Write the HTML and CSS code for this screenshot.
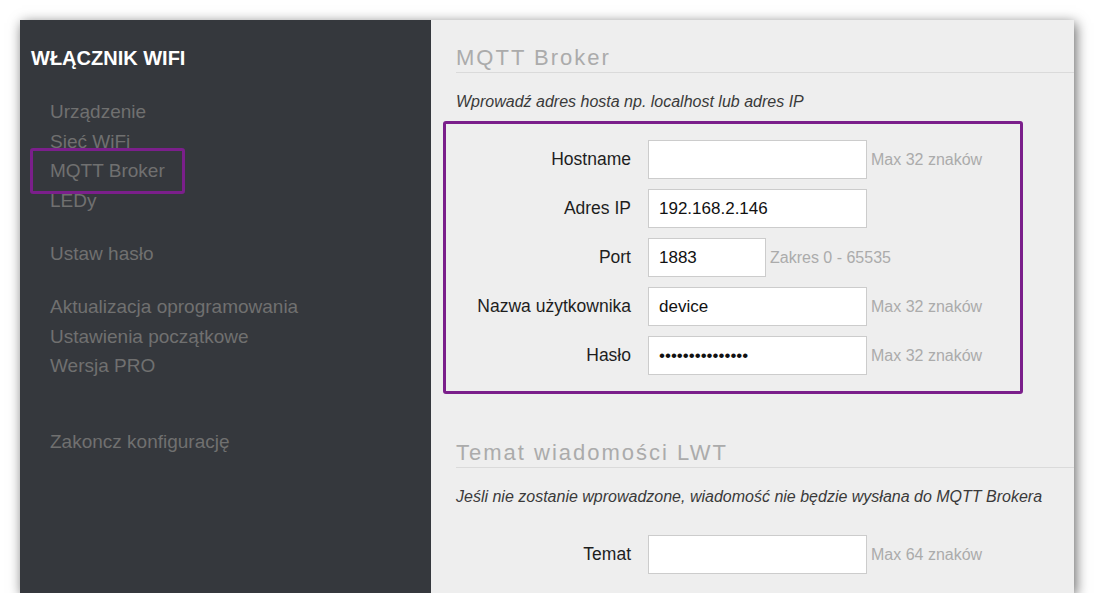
FILE: index.html
```html
<!DOCTYPE html>
<html lang="pl">
<head>
<meta charset="utf-8">
<title>Włącznik WiFi – MQTT Broker</title>
<link rel="stylesheet" href="styles.css">
</head>
<body>
<div class="window">
  <aside class="sidebar">
    <h1 class="brand">WŁĄCZNIK WIFI</h1>
    <ul class="nav-group">
      <li><a class="nav-link" href="#">Urządzenie</a></li>
      <li><a class="nav-link" href="#">Sieć WiFi</a></li>
      <li><a class="nav-link is-marked" href="#">MQTT Broker</a></li>
      <li><a class="nav-link" href="#">LEDy</a></li>
    </ul>
    <ul class="nav-group">
      <li><a class="nav-link" href="#">Ustaw hasło</a></li>
    </ul>
    <ul class="nav-group">
      <li><a class="nav-link" href="#">Aktualizacja oprogramowania</a></li>
      <li><a class="nav-link" href="#">Ustawienia początkowe</a></li>
      <li><a class="nav-link" href="#">Wersja PRO</a></li>
    </ul>
    <ul class="nav-group nav-group-last">
      <li><a class="nav-link" href="#">Zakoncz konfigurację</a></li>
    </ul>
  </aside>
  <main class="content">
    <section class="section">
      <h2 class="section-title">MQTT Broker</h2>
      <p class="section-desc">Wprowadź adres hosta np. localhost lub adres IP</p>
      <div class="form-box">
        <div class="form-row">
          <label class="form-label">Hostname</label>
          <input class="field" type="text" value="">
          <span class="hint">Max 32 znaków</span>
        </div>
        <div class="form-row">
          <label class="form-label">Adres IP</label>
          <input class="field" type="text" value="192.168.2.146">
        </div>
        <div class="form-row">
          <label class="form-label">Port</label>
          <input class="field field-short" type="text" value="1883">
          <span class="hint">Zakres 0 - 65535</span>
        </div>
        <div class="form-row">
          <label class="form-label">Nazwa użytkownika</label>
          <input class="field" type="text" value="device">
          <span class="hint">Max 32 znaków</span>
        </div>
        <div class="form-row">
          <label class="form-label">Hasło</label>
          <input class="field" type="password" value="xxxxxxxxxxxxxxx">
          <span class="hint">Max 32 znaków</span>
        </div>
      </div>
    </section>
    <section class="section section-lwt">
      <h2 class="section-title">Temat wiadomości LWT</h2>
      <p class="section-desc">Jeśli nie zostanie wprowadzone, wiadomość nie będzie wysłana do MQTT Brokera</p>
      <div class="form-plain">
        <div class="form-row">
          <label class="form-label">Temat</label>
          <input class="field" type="text" value="">
          <span class="hint">Max 64 znaków</span>
        </div>
      </div>
    </section>
  </main>
</div>
</body>
</html>
```

FILE: styles.css
```css
*, *::before, *::after { box-sizing: border-box; }

html, body {
  margin: 0;
  padding: 0;
  background: #ffffff;
  font-family: "Liberation Sans", Arial, sans-serif;
}

.window {
  margin: 20px 0 0 20px;
  width: 1054px;
  height: 573px;
  display: flex;
  overflow: hidden;
  box-shadow: 2px 3px 12px rgba(0, 0, 0, 0.6);
}

/* Sidebar */
.sidebar {
  width: 411px;
  flex: 0 0 411px;
  background: #35383d;
  padding: 26px 0 0 11px;
}

.brand {
  margin: 0;
  font-size: 20px;
  line-height: 24px;
  font-weight: bold;
  color: #ffffff;
}

.nav-group {
  list-style: none;
  margin: 0 0 23.5px 0;
  padding: 0 0 0 19px;
}

.nav-group li {
  font-size: 19px;
  line-height: 29.6px;
}

.brand + .nav-group { margin-top: 27px; }

.nav-group-last { margin-top: 46.2px; }

.nav-link {
  position: relative;
  display: block;
  font-size: 19px;
  line-height: 29.6px;
  color: #707070;
  text-decoration: none;
}

.nav-link.is-marked::after {
  content: "";
  position: absolute;
  left: -20px;
  top: -8px;
  width: 155px;
  height: 46px;
  border: 3px solid #7b1f8b;
  border-radius: 3px;
}

/* Content */
.content {
  flex: 1;
  background: #eeeeee;
  padding: 24px 0 0 25px;
}

.section-title {
  margin: 0;
  font-size: 22px;
  line-height: 28px;
  font-weight: normal;
  letter-spacing: 2px;
  color: #ababab;
  border-bottom: 1px solid #dadada;
}

.section-desc {
  margin: 19px 0 0 0;
  font-size: 16px;
  line-height: 20px;
  font-style: italic;
  color: #3a3a3a;
}

.form-box {
  margin: 9px 0 0 -13px;
  width: 580px;
  border: 3px solid #7b1f8b;
  border-radius: 3px;
  padding: 16px 0 16px 10px;
  display: flex;
  flex-direction: column;
  gap: 10px;
}

.section-lwt { margin-top: 45px; }

.form-plain {
  margin-top: 28px;
  display: flex;
  flex-direction: column;
  gap: 10px;
}

.form-row {
  display: flex;
  align-items: center;
  height: 39px;
}

.form-label {
  width: 175px;
  margin-right: 17px;
  text-align: right;
  font-size: 17.5px;
  color: #1e1e1e;
}

.field {
  width: 219px;
  height: 39px;
  border: 1px solid #cccccc;
  background: #ffffff;
  padding: 0 10px;
  margin: 0;
  font-family: "Liberation Sans", Arial, sans-serif;
  font-size: 17px;
  color: #111111;
  outline: none;
}

.field-short { width: 118px; }

.hint {
  margin-left: 4px;
  font-size: 16px;
  color: #ababab;
}
```
